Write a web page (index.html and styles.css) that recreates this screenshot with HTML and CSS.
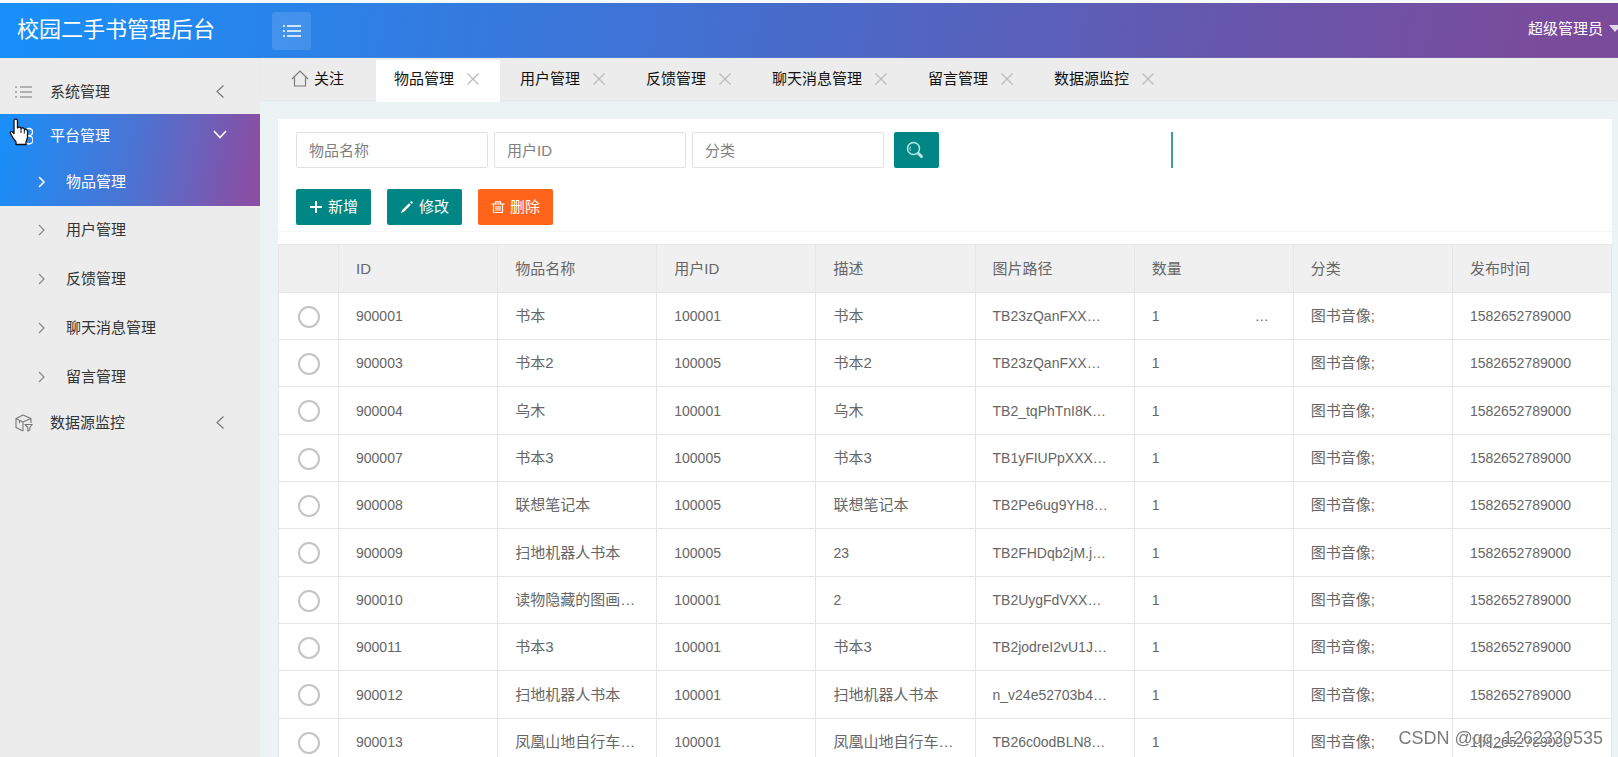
FILE: index.html
```html
<!DOCTYPE html>
<html lang="zh-CN">
<head>
<meta charset="utf-8">
<title>校园二手书管理后台</title>
<link rel="stylesheet" href="styles.css">
</head>
<body>
<header class="topbar">
  <h1 class="brand">校园二手书管理后台</h1>
  <button class="menu-toggle" type="button" aria-label="折叠菜单">
    <svg width="18" height="14" viewBox="0 0 18 14" fill="none" stroke="currentColor" stroke-width="1.6"><path d="M0 2h2M4 2h14M0 7h2M4 7h14M0 12h2M4 12h14"/></svg>
  </button>
  <button class="account" type="button">超级管理员<span class="caret"></span></button>
</header>
<div class="shell">
  <nav class="sidebar">
    <a class="group" href="#">
      <svg class="group-icon" width="18" height="18" viewBox="0 0 18 18" fill="none" stroke="currentColor" stroke-width="1.2"><path d="M0 4h2M5 4h12M0 9h2M5 9h12M0 14h2M5 14h12"/></svg>
      <span class="group-name">系统管理</span>
      <svg class="chevron" width="16" height="16" viewBox="0 0 16 16" fill="none" stroke="currentColor" stroke-width="1.2"><path d="M11.500 1.500L5 7.500l6.500 6"/></svg>
    </a>
    <div class="open-block">
      <a class="group" href="#">
        <svg class="group-icon" width="18" height="18" viewBox="0 0 18 18" fill="none" stroke="currentColor" stroke-width="1.5"><circle cx="14" cy="5" r="3.6"/><circle cx="14" cy="13" r="4"/><circle cx="5" cy="9" r="4"/></svg>
        <span class="group-name">平台管理</span>
        <svg class="chevron" width="16" height="16" viewBox="0 0 16 16" fill="none" stroke="currentColor" stroke-width="1.6"><path d="M2 3l6 6.500L14 3"/></svg>
      </a>
      <a class="item" href="#"><svg width="8" height="12" viewBox="0 0 8 12" fill="none" stroke="currentColor" stroke-width="1.6"><path d="M1 1l5 5-5 5"/></svg>物品管理</a>
      <svg class="pointer" width="22" height="28" viewBox="0 0 22 28"><path d="M5 2.5C5 .6 8.500 .6 8.500 2.500V10c.6-1.400 3.300-1.200 3.500.5.8-1 3.200-.7 3.400 1 1-.8 3 0 3.100 1.500V19c0 2-1 3.300-1.500 5v2.500H7V24c-1.500-2-4-5.200-5.500-8.500-.7-1.700 1.300-2.500 2.300-1.300L5 15.500z" fill="#fff" stroke="#111" stroke-width="1.300" stroke-linejoin="round"/><path d="M12 11v4M15.300 12v3.500" stroke="#111" stroke-width="1"/></svg>
    </div>
    <div class="sub">
      <a class="item" href="#"><svg width="8" height="12" viewBox="0 0 8 12" fill="none" stroke="currentColor" stroke-width="1.2"><path d="M1 1l5 5-5 5"/></svg>用户管理</a>
      <a class="item" href="#"><svg width="8" height="12" viewBox="0 0 8 12" fill="none" stroke="currentColor" stroke-width="1.2"><path d="M1 1l5 5-5 5"/></svg>反馈管理</a>
      <a class="item" href="#"><svg width="8" height="12" viewBox="0 0 8 12" fill="none" stroke="currentColor" stroke-width="1.2"><path d="M1 1l5 5-5 5"/></svg>聊天消息管理</a>
      <a class="item" href="#"><svg width="8" height="12" viewBox="0 0 8 12" fill="none" stroke="currentColor" stroke-width="1.2"><path d="M1 1l5 5-5 5"/></svg>留言管理</a>
    </div>
    <a class="group" href="#">
      <svg class="group-icon" width="18" height="18" viewBox="0 0 18 18" fill="none" stroke="currentColor" stroke-width="1.1" stroke-linejoin="round"><path d="M8 17l-7-3.500V4.500L8 1l8 3.500V9M1 4.500L8 8l8-3.500M8 8v9M4.500 6.300v3M10 10.500h7.300l-2.500 3V16l-2 1v-3.500z"/></svg>
      <span class="group-name">数据源监控</span>
      <svg class="chevron" width="16" height="16" viewBox="0 0 16 16" fill="none" stroke="currentColor" stroke-width="1.2"><path d="M11.500 1.500L5 7.500l6.500 6"/></svg>
    </a>
  </nav>
  <main class="main">
    <div class="tabs">
      <div class="tab home">
        <svg width="18" height="18" viewBox="0 0 18 18" fill="none" stroke="#777" stroke-width="1.1"><path d="M1 9L9 1l8 8M3.500 7.500V16h3.700M14.500 7.500V16h-3.700M3.500 16h11"/></svg>
        <a href="#">关注</a>
      </div>
      <div class="tab active"><a href="#">物品管理</a><button class="close" type="button" aria-label="关闭"><svg width="12" height="12" viewBox="0 0 12 12" stroke="currentColor" stroke-width="1.2"><path d="M.5.5l11 11M11.500.5l-11 11"/></svg></button></div>
      <div class="tab"><a href="#">用户管理</a><button class="close" type="button" aria-label="关闭"><svg width="12" height="12" viewBox="0 0 12 12" stroke="currentColor" stroke-width="1.2"><path d="M.5.5l11 11M11.500.5l-11 11"/></svg></button></div>
      <div class="tab"><a href="#">反馈管理</a><button class="close" type="button" aria-label="关闭"><svg width="12" height="12" viewBox="0 0 12 12" stroke="currentColor" stroke-width="1.2"><path d="M.5.5l11 11M11.500.5l-11 11"/></svg></button></div>
      <div class="tab"><a href="#">聊天消息管理</a><button class="close" type="button" aria-label="关闭"><svg width="12" height="12" viewBox="0 0 12 12" stroke="currentColor" stroke-width="1.2"><path d="M.5.5l11 11M11.500.5l-11 11"/></svg></button></div>
      <div class="tab"><a href="#">留言管理</a><button class="close" type="button" aria-label="关闭"><svg width="12" height="12" viewBox="0 0 12 12" stroke="currentColor" stroke-width="1.2"><path d="M.5.5l11 11M11.500.5l-11 11"/></svg></button></div>
      <div class="tab"><a href="#">数据源监控</a><button class="close" type="button" aria-label="关闭"><svg width="12" height="12" viewBox="0 0 12 12" stroke="currentColor" stroke-width="1.2"><path d="M.5.5l11 11M11.500.5l-11 11"/></svg></button></div>
    </div>
    <div class="content">
      <section class="panel">
        <div class="tools">
          <form class="search">
            <input class="field" type="text" placeholder="物品名称" aria-label="物品名称">
            <input class="field" type="text" placeholder="用户ID" aria-label="用户ID">
            <input class="field" type="text" placeholder="分类" aria-label="分类">
            <button class="find" type="button" aria-label="搜索">
              <svg width="18" height="18" viewBox="0 0 18 18" fill="none" stroke="currentColor"><circle cx="7.500" cy="7.500" r="6" stroke-width="1.500"/><path d="M4.500 9.500a3.800 3.800 0 0 1 0-4" stroke-width="1"/><path d="M12.500 12.500l3 3" stroke-width="3" stroke-linecap="round"/></svg>
            </button>
            <span class="marker"></span>
          </form>
          <div class="actions">
            <button class="btn" type="button"><svg width="14" height="14" viewBox="0 0 14 14" stroke="currentColor" stroke-width="2"><path d="M7 1v12M1 7h12"/></svg>新增</button>
            <button class="btn" type="button"><svg width="14" height="14" viewBox="0 0 14 14" fill="currentColor"><path d="M1 13l1.200-3L9 3.200l1.800 1.800L4 11.800zM10 2.300l1-1c.8-.6 2.300.9 1.700 1.700l-1 1z"/></svg>修改</button>
            <button class="btn danger" type="button"><svg width="14" height="14" viewBox="0 0 14 14" fill="none" stroke="currentColor" stroke-width="1.200"><path d="M.5 4h13M4.500 4V1.800h5V4M2.500 4v8.500h9V4M5 6v4.800M7 6v4.800M9 6v4.800"/></svg>删除</button>
          </div>
        </div>
        <table class="grid">
          <thead><tr><th class="pick"></th><th>ID</th><th>物品名称</th><th>用户ID</th><th>描述</th><th>图片路径</th><th>数量</th><th>分类</th><th>发布时间</th></tr></thead>
          <tbody>
            <tr><td class="pick"><input type="radio" name="row" aria-label="900001"></td><td>900001</td><td class="zh">书本</td><td>100001</td><td class="zh">书本</td><td>TB23zQanFXX…</td><td><div class="count">1<span>…</span></div></td><td class="zh">图书音像;</td><td>1582652789000</td></tr>
            <tr><td class="pick"><input type="radio" name="row" aria-label="900003"></td><td>900003</td><td class="zh">书本2</td><td>100005</td><td class="zh">书本2</td><td>TB23zQanFXX…</td><td>1</td><td class="zh">图书音像;</td><td>1582652789000</td></tr>
            <tr><td class="pick"><input type="radio" name="row" aria-label="900004"></td><td>900004</td><td class="zh">乌木</td><td>100001</td><td class="zh">乌木</td><td>TB2_tqPhTnI8K…</td><td>1</td><td class="zh">图书音像;</td><td>1582652789000</td></tr>
            <tr><td class="pick"><input type="radio" name="row" aria-label="900007"></td><td>900007</td><td class="zh">书本3</td><td>100005</td><td class="zh">书本3</td><td>TB1yFIUPpXXX…</td><td>1</td><td class="zh">图书音像;</td><td>1582652789000</td></tr>
            <tr><td class="pick"><input type="radio" name="row" aria-label="900008"></td><td>900008</td><td class="zh">联想笔记本</td><td>100005</td><td class="zh">联想笔记本</td><td>TB2Pe6ug9YH8…</td><td>1</td><td class="zh">图书音像;</td><td>1582652789000</td></tr>
            <tr><td class="pick"><input type="radio" name="row" aria-label="900009"></td><td>900009</td><td class="zh">扫地机器人书本</td><td>100005</td><td>23</td><td>TB2FHDqb2jM.j…</td><td>1</td><td class="zh">图书音像;</td><td>1582652789000</td></tr>
            <tr><td class="pick"><input type="radio" name="row" aria-label="900010"></td><td>900010</td><td class="zh">读物隐藏的图画…</td><td>100001</td><td>2</td><td>TB2UygFdVXX…</td><td>1</td><td class="zh">图书音像;</td><td>1582652789000</td></tr>
            <tr><td class="pick"><input type="radio" name="row" aria-label="900011"></td><td>900011</td><td class="zh">书本3</td><td>100001</td><td class="zh">书本3</td><td>TB2jodreI2vU1J…</td><td>1</td><td class="zh">图书音像;</td><td>1582652789000</td></tr>
            <tr><td class="pick"><input type="radio" name="row" aria-label="900012"></td><td>900012</td><td class="zh">扫地机器人书本</td><td>100001</td><td class="zh">扫地机器人书本</td><td>n_v24e52703b4…</td><td>1</td><td class="zh">图书音像;</td><td>1582652789000</td></tr>
            <tr><td class="pick"><input type="radio" name="row" aria-label="900013"></td><td>900013</td><td class="zh">凤凰山地自行车…</td><td>100001</td><td class="zh">凤凰山地自行车…</td><td>TB26c0odBLN8…</td><td>1</td><td class="zh">图书音像;</td><td>1582652789000</td></tr>
          </tbody>
        </table>
      </section>
    </div>
  </main>
</div>
<div class="watermark">CSDN @qq_1262330535</div>
</body>
</html>
```

FILE: styles.css
```css
* { box-sizing: border-box; }
body {
  margin: 0;
  height: 100vh;
  overflow: hidden;
  display: flex;
  flex-direction: column;
  border-top: 3px solid #f6fafc;
  font: 15px/20px "Liberation Sans", "Noto Sans CJK SC", sans-serif;
  color: #333;
}
a { color: inherit; text-decoration: none; }
button { font: inherit; color: inherit; border: 0; padding: 0; background: none; }
svg { display: block; flex: none; }

.topbar {
  display: flex;
  align-items: center;
  flex: none;
  height: 55px;
  padding-left: 17px;
  color: #fff;
  background: linear-gradient(100deg, #1890fa, #4171d2 42%, #6259b0 72%, #7b4b9b 96%);
}
.brand { margin: 0; width: 255px; padding-bottom: 2px; font-size: 22px; font-weight: 400; line-height: 32px; }
.menu-toggle {
  display: flex;
  align-items: center;
  justify-content: center;
  width: 39px;
  height: 38px;
  border-radius: 3px;
  background: rgba(255, 255, 255, .12);
}
.account { display: flex; align-items: center; gap: 6px; margin-left: auto; padding-bottom: 4px; margin-right: -3px; }
.caret { border: 6px solid transparent; border-top: 7px solid #e4d8ee; border-bottom: 0; }

.shell { display: flex; flex: 1; min-height: 0; }
.sidebar { flex: none; width: 260px; padding-top: 12px; background: #ececec; }
.group { display: flex; align-items: center; height: 44px; padding: 0 32px 0 15px; }
.group-icon { color: #777; }
.group-name { flex: 1; margin-left: 17px; }
.chevron { color: #777; }
.open-block { position: relative; color: #fff; background: linear-gradient(100deg, #1890fa, #4a74d4 50%, #8a4ea4 96%); }
.open-block .group-icon, .open-block .chevron { color: inherit; }
.pointer { position: absolute; left: 9px; top: 4px; }
.item { display: flex; align-items: center; gap: 20px; height: 48px; padding-left: 38px; }
.sub { display: flex; flex-direction: column; gap: 1px; }
.sub svg { color: #888; }

.main { flex: 1; min-width: 0; background: #ebf3f4; }
.tabs { display: flex; gap: 2px; height: 42px; padding: 2px 0 0 14px; background: #ececec; box-shadow: 0 1px 2px #e0e6e6; }
.tab { display: flex; align-items: center; flex: none; height: 42px; padding: 0 21px 4px 18px; gap: 13px; color: #111; }
.tab.active { background: #fff; position: relative; }
.home { gap: 5px; padding-right: 30px; padding-left: 17px; }
.close { color: #bbb; }

.content { padding: 19px 6px 0 18px; }
.panel { background: #fff; }
.tools { display: flex; flex-direction: column; gap: 21px; padding: 13px 18px 6px; margin-bottom: 12px; border-bottom: 1px solid #f6f6f6; }
.search { display: flex; gap: 6px; }
.field {
  width: 192px;
  height: 36px;
  padding: 0 12px;
  border: 1px solid #e2e2e2;
  border-radius: 2px;
  font: inherit;
}
.field::placeholder { color: #808080; opacity: 1; }
.find {
  display: flex;
  align-items: center;
  justify-content: center;
  width: 45px;
  margin-left: 4px;
  padding-right: 3px;
  border-radius: 2px;
  color: #b8e8e4;
  background: #008684;
}
.marker { width: 2px; margin-left: 226px; background: #3d9f9b; }
.actions { display: flex; gap: 16px; }
.btn {
  display: flex;
  align-items: center;
  justify-content: center;
  gap: 5px;
  width: 75px;
  height: 36px;
  border-radius: 2px;
  color: #fff;
  background: #008684;
}
.danger { background: #ff641a; }

.grid { width: 100%; table-layout: fixed; border-collapse: collapse; color: #666; }
.grid th { height: 48px; background: #f0f0f0; font-weight: 400; }
.grid th, .grid td { padding: 0 17px; border: 1px solid #e6e6e9; text-align: left; white-space: nowrap; }
.grid td { height: 47px; font-size: 14px; }
.grid tr:nth-child(3n) td { height: 48px; }
.grid td.zh { font-size: 15px; }
.grid .pick { width: 60px; padding: 0; }
.pick input {
  display: block;
  appearance: none;
  width: 22px;
  height: 22px;
  margin: 1px auto 0;
  border: 2px solid #c4c4c4;
  border-radius: 50%;
}
.count { display: flex; justify-content: space-between; padding-right: 7px; }

.watermark {
  position: fixed;
  right: 15px;
  bottom: 9px;
  font-size: 18px;
  color: rgba(90, 90, 90, .8);
  text-shadow: 0 0 1px #fff, 1px 1px 0 #fff;
}
```
